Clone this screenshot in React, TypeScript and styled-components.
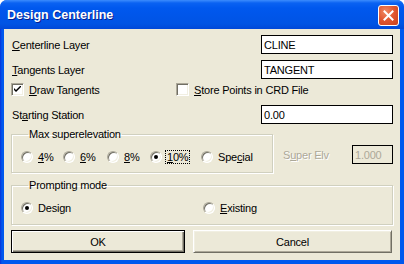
import React from 'react';
import styled, { createGlobalStyle } from 'styled-components';

const GlobalStyle = createGlobalStyle`
  html, body {
    margin: 0;
    padding: 0;
    background: #ffffff;
  }
  body {
    font-family: "Liberation Sans", Arial, sans-serif;
    font-size: 11px;
    letter-spacing: -0.2px;
  }
`;

const Window = styled.div`
  width: 404px;
  height: 264px;
  display: flex;
  flex-direction: column;
  background: #0055e5;
  border-radius: 7px 7px 0 0;
  overflow: hidden;
`;

const TitleBar = styled.div`
  height: 29px;
  flex: none;
  display: flex;
  align-items: center;
  justify-content: space-between;
  padding: 0 5px 0 7px;
  box-sizing: border-box;
  background: linear-gradient(
    to bottom,
    #3c8cfd 0px,
    #0a62f2 3px,
    #0058ee 8px,
    #0055e8 18px,
    #0054e3 24px,
    #0048d8 29px
  );
`;

const Title = styled.span`
  font-family: "Liberation Sans", Arial, sans-serif;
  font-weight: bold;
  font-size: 12.5px;
  letter-spacing: 0;
  color: #ffffff;
  text-shadow: 1px 1px 0 #0a1e8c;
  padding-top: 1px;
`;

const CloseButton = styled.div`
  width: 21px;
  height: 21px;
  box-sizing: border-box;
  border: 1px solid #ffffff;
  border-radius: 3px;
  background: radial-gradient(circle at 35% 30%, #f08a64 0%, #e0552f 50%, #c8401c 100%);
  display: flex;
  align-items: center;
  justify-content: center;
  margin-top: 1px;
`;

const Frame = styled.div`
  flex: 1;
  display: flex;
  padding: 0 4px 4px 4px;
  background: linear-gradient(to right, #0831d9 0px, #0058ee 2px, #0058ee 400px);
`;

const Body = styled.div`
  flex: 1;
  background: #ece9d8;
  padding: 6px 7px 0 7px;
  display: flex;
  flex-direction: column;
  color: #000000;
`;

const FieldRow = styled.div<{ $top: number }>`
  display: flex;
  align-items: center;
  justify-content: space-between;
  height: 19px;
  margin-top: ${(p) => p.$top}px;
`;

const Label = styled.span<{ $disabled?: boolean }>`
  padding-left: 1px;
  white-space: nowrap;
  color: ${(p) => (p.$disabled ? '#aca899' : '#000000')};
  text-shadow: ${(p) => (p.$disabled ? '1px 1px 0 #ffffff' : 'none')};
`;

const Key = styled.span`
  text-decoration: underline;
  text-underline-offset: 1px;
`;

const TextBox = styled.div<{ $width: number; $disabled?: boolean }>`
  width: ${(p) => p.$width}px;
  height: 19px;
  box-sizing: border-box;
  border: 1px solid #000000;
  background: ${(p) => (p.$disabled ? '#ece9d8' : '#ffffff')};
  color: ${(p) => (p.$disabled ? '#aca899' : '#000000')};
  padding: 0 2px;
  display: flex;
  align-items: center;
  font-size: 11px;
`;

const CheckRow = styled.div`
  display: flex;
  align-items: center;
  height: 13px;
  margin-top: 4px;
`;

const CheckItem = styled.label<{ $width?: number }>`
  display: flex;
  align-items: center;
  gap: 5px;
  width: ${(p) => (p.$width ? `${p.$width}px` : 'auto')};
`;

const CheckBox = styled.span`
  width: 13px;
  height: 13px;
  box-sizing: border-box;
  border: 1px solid;
  border-color: #aca899 #ffffff #ffffff #aca899;
  box-shadow: inset 1px 1px 0 #716f64, inset -1px -1px 0 #f1efe2;
  background: #ffffff;
  display: flex;
  align-items: center;
  justify-content: center;
  flex: none;
`;

const GroupRow = styled.div`
  display: flex;
  margin-top: 4px;
`;

const Group = styled.fieldset<{ $width: number; $height: number }>`
  width: ${(p) => p.$width}px;
  height: ${(p) => p.$height}px;
  box-sizing: border-box;
  margin: 0;
  padding: 0 0 0 9px;
  border: 1px solid #d0d0bf;
  box-shadow: inset 1px 1px 0 #ffffff, 1px 1px 0 #ffffff;
  display: flex;
  align-items: center;
`;

const Caption = styled.legend`
  padding: 0 1px;
  margin-left: 7px;
  font-size: 11px;
  line-height: 13px;
  color: #000000;
`;

const RadioItem = styled.label<{ $width?: number }>`
  display: flex;
  align-items: center;
  gap: 5px;
  flex: none;
  width: ${(p) => (p.$width ? `${p.$width}px` : 'auto')};
`;

const Radio = styled.span`
  width: 12px;
  height: 12px;
  box-sizing: border-box;
  border-radius: 50%;
  border: 1px solid;
  border-color: #aca899 #ffffff #ffffff #aca899;
  box-shadow: inset 1px 1px 0 #716f64, inset -1px -1px 0 #f1efe2;
  background: #ffffff;
  display: flex;
  align-items: center;
  justify-content: center;
  flex: none;
`;

const Dot = styled.span`
  width: 4px;
  height: 4px;
  border-radius: 50%;
  background: #000000;
`;

const Focus = styled.span`
  outline: 1px dotted #000000;
  outline-offset: 0px;
  padding: 0 1px;
  margin-left: -1px;
`;

const SideField = styled.div`
  flex: 1;
  display: flex;
  align-items: center;
  justify-content: space-between;
  padding-left: 9px;
  align-self: flex-end;
  margin-bottom: 9px;
`;

const SecondGroupRow = styled.div`
  display: flex;
  margin-top: 6px;
`;

const ButtonRow = styled.div`
  display: flex;
  gap: 8px;
  margin-top: 5px;
`;

const Button = styled.div<{ $width: number; $default?: boolean }>`
  width: ${(p) => p.$width}px;
  height: 23px;
  box-sizing: border-box;
  display: flex;
  align-items: center;
  justify-content: center;
  background: #ece9d8;
  border: 1px solid;
  border-color: ${(p) => (p.$default ? '#000000' : '#ffffff #716f64 #716f64 #ffffff')};
  box-shadow: ${(p) =>
    p.$default
      ? 'inset 1px 1px 0 #ffffff, inset -1px -1px 0 #716f64, inset -2px -2px 0 #aca899'
      : 'inset 1px 1px 0 #f1efe2, inset -1px -1px 0 #aca899'};
`;

function Check() {
  return (
    <svg width="7" height="7" viewBox="0 0 7 7">
      <path d="M0 2 L0 4 L2 6 L7 1 L7 -1 L2 4 Z" fill="#000000" />
    </svg>
  );
}

function CloseGlyph() {
  return (
    <svg width="11" height="11" viewBox="0 0 11 11">
      <path d="M1.5 1.5 L9.5 9.5 M9.5 1.5 L1.5 9.5" stroke="#ffffff" strokeWidth="2" strokeLinecap="square" />
    </svg>
  );
}

const superOptions = [
  { key: '4', rest: '%', width: 42 },
  { key: '6', rest: '%', width: 44 },
  { key: '8', rest: '%', width: 43 },
  { key: '1', rest: '0%', width: 51, checked: true },
];

export default function App(): JSX.Element {
  return (
    <>
      <GlobalStyle />
      <Window>
        <TitleBar>
          <Title>Design Centerline</Title>
          <CloseButton>
            <CloseGlyph />
          </CloseButton>
        </TitleBar>
        <Frame>
          <Body>
            <FieldRow $top={0}>
              <Label>
                <Key>C</Key>enterline Layer
              </Label>
              <TextBox $width={132}>CLINE</TextBox>
            </FieldRow>
            <FieldRow $top={6}>
              <Label>
                <Key>T</Key>angents Layer
              </Label>
              <TextBox $width={132}>TANGENT</TextBox>
            </FieldRow>
            <CheckRow>
              <CheckItem $width={165}>
                <CheckBox>
                  <Check />
                </CheckBox>
                <span>
                  <Key>D</Key>raw Tangents
                </span>
              </CheckItem>
              <CheckItem>
                <CheckBox />
                <span>
                  <Key>S</Key>tore Points in CRD File
                </span>
              </CheckItem>
            </CheckRow>
            <FieldRow $top={9}>
              <Label>
                St<Key>a</Key>rting Station
              </Label>
              <TextBox $width={132}>0.00</TextBox>
            </FieldRow>
            <GroupRow>
              <Group $width={262} $height={45}>
                <Caption>Max superelevation</Caption>
                {superOptions.map((o) => (
                  <RadioItem key={o.key + o.rest} $width={o.width}>
                    <Radio>{o.checked && <Dot />}</Radio>
                    {o.checked ? (
                      <Focus>
                        <Key>{o.key}</Key>
                        {o.rest}
                      </Focus>
                    ) : (
                      <span>
                        <Key>{o.key}</Key>
                        {o.rest}
                      </span>
                    )}
                  </RadioItem>
                ))}
                <RadioItem>
                  <Radio />
                  <span>
                    Spe<Key>c</Key>ial
                  </span>
                </RadioItem>
              </Group>
              <SideField>
                <Label $disabled>
                  S<Key>u</Key>per Elv
                </Label>
                <TextBox $width={41} $disabled>
                  1.000
                </TextBox>
              </SideField>
            </GroupRow>
            <SecondGroupRow>
              <Group $width={382} $height={46}>
                <Caption>Prompting mode</Caption>
                <RadioItem $width={182}>
                  <Radio>
                    <Dot />
                  </Radio>
                  <span>Design</span>
                </RadioItem>
                <RadioItem>
                  <Radio />
                  <span>
                    <Key>E</Key>xisting
                  </span>
                </RadioItem>
              </Group>
            </SecondGroupRow>
            <ButtonRow>
              <Button $width={174} $default>
                OK
              </Button>
              <Button $width={199}>Cancel</Button>
            </ButtonRow>
          </Body>
        </Frame>
      </Window>
    </>
  );
}
